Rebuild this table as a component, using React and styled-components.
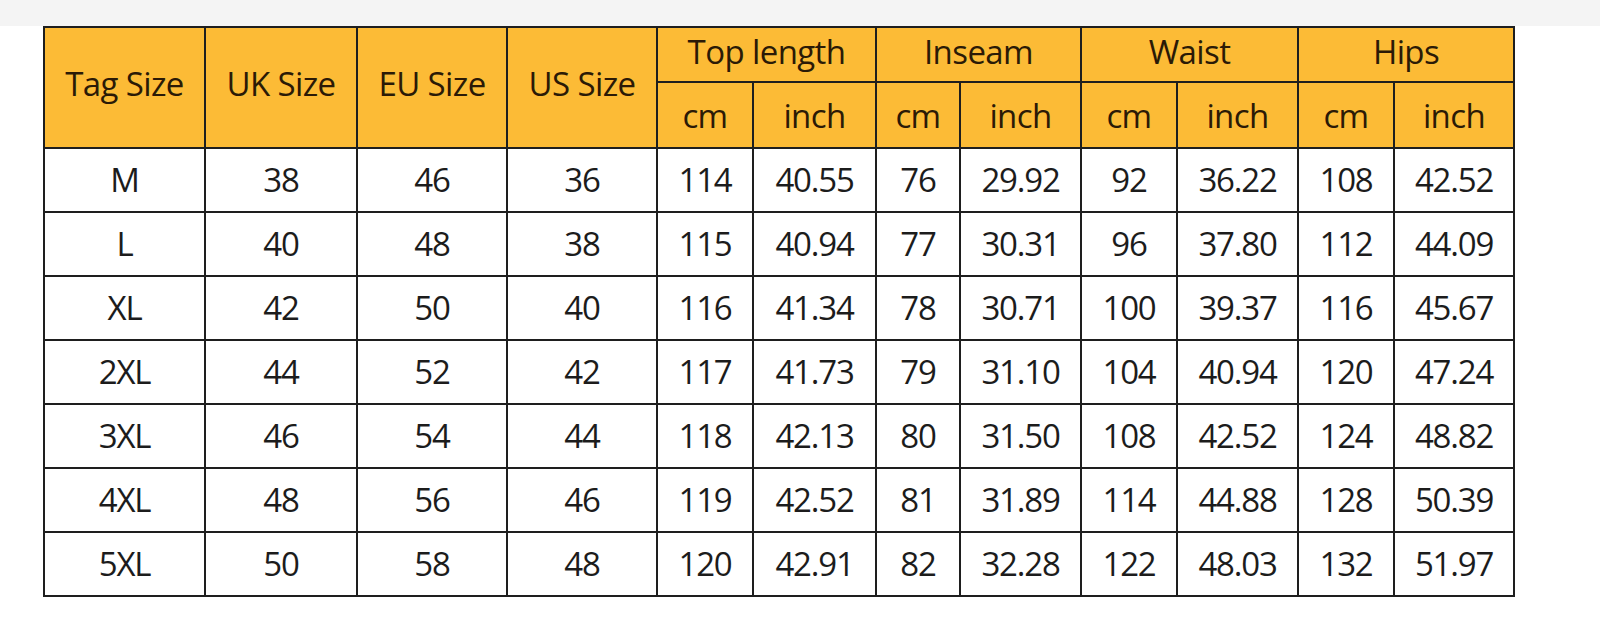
import React from "react";
import styled, { createGlobalStyle } from "styled-components";

const Global = createGlobalStyle`
  html, body { margin: 0; padding: 0; background: #ffffff; }
  body { font-family: "Open Sans", "Noto Sans", sans-serif; }
`;

const Page = styled.div`
  width: 1600px;
  height: 621px;
  background: #ffffff;
  overflow: hidden;
`;

const Band = styled.div`
  height: 26px;
  background: #f4f4f4;
`;

const Grid = styled.div`
  margin-left: 43px;
  display: inline-grid;
  grid-template-columns: 159px 150px 148px 148px 94px 121px 82px 119px 94px 119px 94px 118px;
  grid-template-rows: 53px 64px repeat(7, 62px);
  gap: 2px;
  padding: 2px;
  background: #1e1e1e;
`;

const Cell = styled.div`
  display: flex;
  align-items: center;
  justify-content: center;
  font-size: 33px;
  letter-spacing: ${(p) => (p.$head ? "-0.6px" : "-1.2px")};
  line-height: 1;
  padding-bottom: ${(p) => p.$pad ?? 2}px;
  box-sizing: border-box;
  background: ${(p) => (p.$head ? "#fcbb36" : "#ffffff")};
  color: ${(p) => (p.$head ? "#2b1a06" : "#1c1c1c")};
  grid-row: ${(p) => p.$row || "auto"};
  grid-column: ${(p) => p.$col || "auto"};
`;

const groups = ["Top length", "Inseam", "Waist", "Hips"];
const rows = [
  ["M", "38", "46", "36", "114", "40.55", "76", "29.92", "92", "36.22", "108", "42.52"],
  ["L", "40", "48", "38", "115", "40.94", "77", "30.31", "96", "37.80", "112", "44.09"],
  ["XL", "42", "50", "40", "116", "41.34", "78", "30.71", "100", "39.37", "116", "45.67"],
  ["2XL", "44", "52", "42", "117", "41.73", "79", "31.10", "104", "40.94", "120", "47.24"],
  ["3XL", "46", "54", "44", "118", "42.13", "80", "31.50", "108", "42.52", "124", "48.82"],
  ["4XL", "48", "56", "46", "119", "42.52", "81", "31.89", "114", "44.88", "128", "50.39"],
  ["5XL", "50", "58", "48", "120", "42.91", "82", "32.28", "122", "48.03", "132", "51.97"],
];

export default function App() {
  return (
    <Page>
      <Global />
      <Band />
      <Grid>
        {["Tag Size", "UK Size", "EU Size", "US Size"].map((t, i) => (
          <Cell key={t} $head $pad={8} $row="1 / span 2" $col={`${i + 1}`}>
            {t}
          </Cell>
        ))}
        {groups.map((g, i) => (
          <Cell key={g} $head $pad={6} $row="1" $col={`${5 + i * 2} / span 2`}>
            {g}
          </Cell>
        ))}
        {groups.map((g, i) => (
          <React.Fragment key={g + "u"}>
            <Cell $head $pad={0} $row="2" $col={`${5 + i * 2}`}>cm</Cell>
            <Cell $head $pad={0} $row="2" $col={`${6 + i * 2}`}>inch</Cell>
          </React.Fragment>
        ))}
        {rows.map((r, ri) =>
          r.map((v, ci) => (
            <Cell key={ri + "-" + ci} $row={`${ri + 3}`} $col={`${ci + 1}`}>
              {v}
            </Cell>
          ))
        )}
      </Grid>
    </Page>
  );
}
